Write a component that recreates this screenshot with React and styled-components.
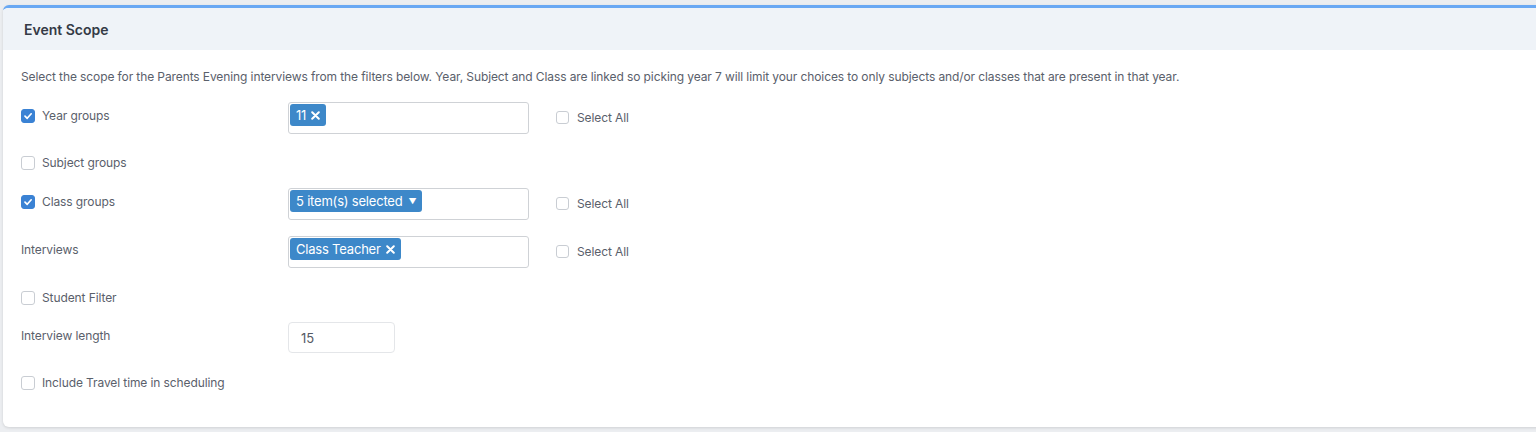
import React from 'react'
import styled, { createGlobalStyle } from 'styled-components'

const GlobalStyle = createGlobalStyle`
  body {
    margin: 0;
    background: #eceef1;
    font-family: Inter, "Noto Sans", sans-serif;
    color: #5a606b;
    letter-spacing: -0.1px;
  }
`

const rows = [
  { label: 'Year groups', check: true, checked: true, mt: 17, field: 'chips', chips: [{ text: '11', close: true }], selectAll: true },
  { label: 'Subject groups', check: true, checked: false, mt: 14 },
  { label: 'Class groups', check: true, checked: true, mt: 8, field: 'chips', chips: [{ text: '5 item(s) selected', caret: true }], selectAll: true },
  { label: 'Interviews', check: false, mt: 16, field: 'chips', chips: [{ text: 'Class Teacher', close: true }], selectAll: true },
  { label: 'Student Filter', check: true, checked: false, mt: 15 },
  { label: 'Interview length', check: false, mt: 7, field: 'input', value: '15' },
  { label: 'Include Travel time in scheduling', check: true, checked: false, mt: 14, wide: true },
]

function CheckBox({ checked }) {
  return (
    <Box $checked={checked}>
      {checked && (
        <svg width="10" height="10" viewBox="0 0 10 10">
          <path d="M2 5.2 L4.2 7.3 L8.2 2.8" fill="none" stroke="#fff" strokeWidth="1.7" strokeLinecap="round" strokeLinejoin="round" />
        </svg>
      )}
    </Box>
  )
}

function CloseIcon() {
  return (
    <ChipX width="9" height="9" viewBox="0 0 9 9">
      <path d="M1.2 1.2 L7.8 7.8 M7.8 1.2 L1.2 7.8" stroke="#fff" strokeWidth="2" strokeLinecap="round" />
    </ChipX>
  )
}

function App() {
  return (
    <Page>
      <GlobalStyle />
      <Card>
        <Header>Event Scope</Header>
        <Body>
          <Intro>
            Select the scope for the Parents Evening interviews from the filters below. Year, Subject and Class are linked so picking year 7 will limit your choices to only subjects and/or classes that are present in that year.
          </Intro>
          {rows.map(r => (
            <Row key={r.label} $mt={r.mt}>
              <LabelCol $wide={r.wide} $offset={r.field ? 6 : 7}>
                {r.check && <CheckBox checked={r.checked} />}
                <span>{r.label}</span>
              </LabelCol>
              {r.field === 'chips' && (
                <MultiSelect>
                  {r.chips.map(c => (
                    <Chip key={c.text}>
                      {c.text}
                      {c.close && <CloseIcon />}
                      {c.caret && <Caret>▼</Caret>}
                    </Chip>
                  ))}
                </MultiSelect>
              )}
              {r.field === 'input' && <NumberInput>{r.value}</NumberInput>}
              {r.selectAll && (
                <SelectAll>
                  <SmallBox />
                  <span>Select All</span>
                </SelectAll>
              )}
            </Row>
          ))}
        </Body>
      </Card>
    </Page>
  )
}

export default App

const Page = styled.div`
  padding: 5px 0 5px 3px;
  height: 432px;
  box-sizing: border-box;
  overflow: hidden;
`

const Card = styled.div`
  background: #fff;
  border-top: 3px solid #69a8f3;
  border-radius: 6px 0 0 6px;
  margin-right: -10px;
  height: 422px;
  box-sizing: border-box;
  box-shadow: 0 1px 3px rgba(0, 0, 0, 0.12);
  overflow: hidden;
`

const Header = styled.div`
  background: #eff3f8;
  height: 42px;
  display: flex;
  align-items: center;
  padding-left: 21px;
  font-size: 14px;
  font-weight: 600;
  color: #343a46;
  letter-spacing: 0;
`

const Body = styled.div`
  padding: 18px 18px 0 18px;
`

const Intro = styled.p`
  margin: 0;
  font-size: 12px;
  line-height: 17px;
  color: #5a606b;
`

const Row = styled.div`
  display: flex;
  align-items: flex-start;
  min-height: 32px;
  margin-top: ${p => p.$mt}px;
`

const LabelCol = styled.div`
  width: ${p => (p.$wide ? 'auto' : '267px')};
  display: flex;
  align-items: center;
  gap: 7px;
  padding-top: ${p => p.$offset}px;
  font-size: 12px;
  line-height: 16px;
  color: #5a606b;
  flex-shrink: 0;
`

const Box = styled.span`
  width: 14px;
  height: 14px;
  box-sizing: border-box;
  border-radius: 3px;
  border: 1px solid ${p => (p.$checked ? '#3a82d4' : '#c9cdd3')};
  background: ${p => (p.$checked ? '#3a82d4' : '#fff')};
  display: inline-flex;
  align-items: center;
  justify-content: center;
`

const MultiSelect = styled.div`
  width: 241px;
  height: 32px;
  box-sizing: border-box;
  border: 1px solid #cfd2d6;
  border-radius: 3px;
  padding: 1px;
  display: flex;
  align-items: flex-start;
`

const Chip = styled.span`
  display: inline-flex;
  align-items: center;
  height: 22px;
  padding: 0 6px;
  border-radius: 3px;
  background: #3d88c9;
  color: #fff;
  font-size: 13px;
  line-height: 22px;
  letter-spacing: -0.2px;
`

const ChipX = styled.svg`
  margin-left: 5px;
`

const Caret = styled.span`
  margin-left: 6px;
  font-size: 8px;
`

const NumberInput = styled.div`
  width: 107px;
  height: 31px;
  box-sizing: border-box;
  border: 1px solid #e4e6e9;
  border-radius: 4px;
  padding-left: 12px;
  display: flex;
  align-items: center;
  font-size: 13px;
  color: #545a64;
`

const SelectAll = styled.div`
  display: flex;
  align-items: center;
  gap: 8px;
  margin-left: 27px;
  padding-top: 8px;
  font-size: 12px;
  color: #5a606b;
`

const SmallBox = styled.span`
  width: 13px;
  height: 13px;
  box-sizing: border-box;
  border: 1px solid #c9cdd3;
  border-radius: 3px;
  background: #fff;
`
